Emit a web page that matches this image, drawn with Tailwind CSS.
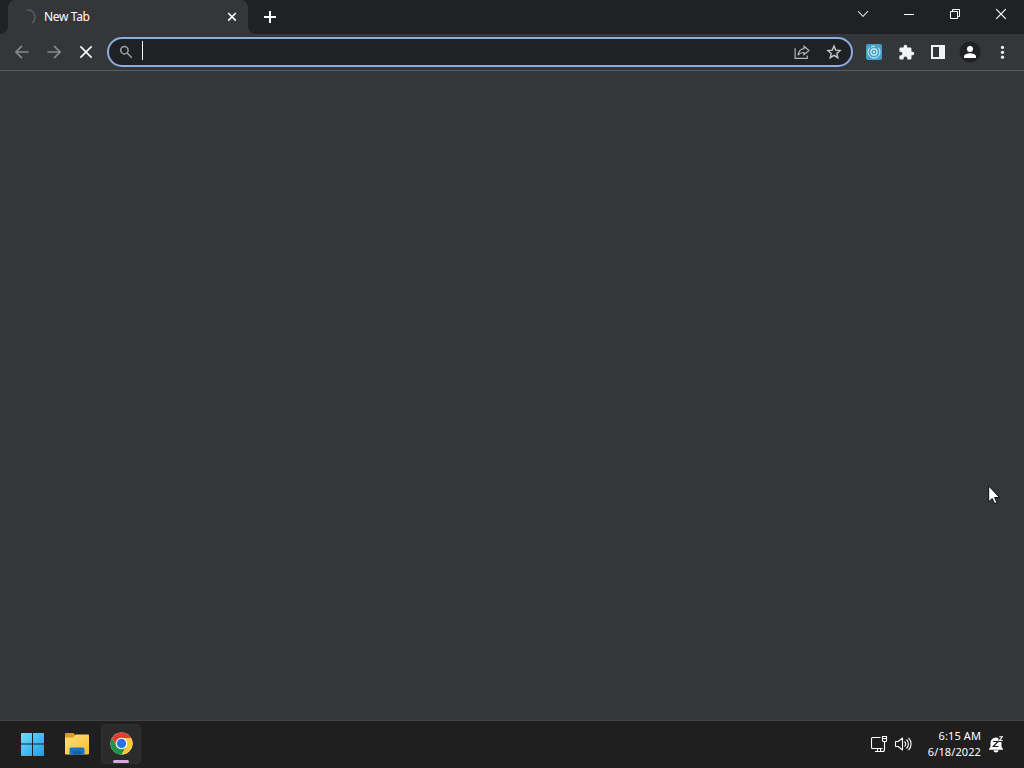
<!DOCTYPE html>
<html lang="en">
<head>
  <meta charset="UTF-8" />
  <meta name="viewport" content="width=device-width, initial-scale=1.0"/>
  <title>New Tab</title>
  <script src="https://cdn.jsdelivr.net/npm/@tailwindcss/browser@4"></script>
  <style>
    body {
      font-family: 'Noto Sans', 'Open Sans', sans-serif;
    }
  </style>
</head>
<body class="bg-[#35363a] text-white">
<div class="relative w-[1024px] h-[768px] flex flex-col overflow-hidden">

  <!-- Tab strip -->
  <header class="h-[34px] shrink-0 flex bg-[#202124]">
    <svg class="w-2 self-end h-2" viewBox="0 0 8 8" fill="#35363a"><path d="M8 0v8H0a8 8 0 0 0 8-8z"/></svg>
    <div class="w-60 flex items-center rounded-t-lg bg-[#35363a] pl-[13px] pr-2.5">
      <svg class="w-4 h-4" viewBox="0 0 16 16" fill="none" stroke="#5b5c60" stroke-width="1.5"><path d="M5.500 1.200a7 7 0 0 1 5.500 12.600"/></svg>
      <span class="ml-[7px] grow text-[12px] leading-4 tracking-[-0.35px]">New Tab</span>
      <svg class="w-3 h-3" viewBox="0 0 12 12" fill="none" stroke="#fff" stroke-width="1.6"><path d="M2.200 2l7.600 7.600M9.800 2L2.200 9.600"/></svg>
    </div>
    <svg class="w-2 self-end h-2" viewBox="0 0 8 8" fill="#35363a"><path d="M0 0v8h8a8 8 0 0 1-8-8z"/></svg>
    <button class="w-7 flex items-center justify-center">
      <svg class="w-3.5 h-3.5" viewBox="0 0 14 14" fill="none" stroke="#fff" stroke-width="2"><path d="M7 1v12M1 7h12"/></svg>
    </button>
    <div class="ml-auto h-7 flex">
      <button class="w-[46px] flex items-center justify-center">
        <svg class="w-3 h-3" viewBox="0 0 12 12" fill="none" stroke="#d5d6d8" stroke-width="1.1"><path d="M1 3.2l5 5.300 5-5.300"/></svg>
      </button>
      <button class="w-[46px] flex items-center justify-center">
        <svg class="w-2.5 h-3" viewBox="0 0 10 12" fill="none" stroke="#fff"><path d="M0 6.5h10"/></svg>
      </button>
      <button class="w-[46px] flex items-center justify-center">
        <svg class="w-3 h-3" viewBox="0 0 12 12" fill="none" stroke="#fff"><path d="M1.5 3.5h7v7h-7zM3.5 3.5v-2h7v7h-2"/></svg>
      </button>
      <button class="w-[46px] flex items-center justify-center">
        <svg class="w-3 h-3" viewBox="0 0 12 12" fill="none" stroke="#fff" stroke-width="1.2"><path d="M1.200 1.200l9.600 9.600M10.800 1.200L1.200 10.800"/></svg>
      </button>
    </div>
  </header>

  <!-- Toolbar -->
  <div class="h-[37px] shrink-0 flex items-center border-b border-[#5a5b5e] bg-[#35363a] pl-1.5 pr-1.5">
    <button class="w-8 flex justify-center">
      <svg class="w-4 h-4" viewBox="0 0 16 16" fill="none" stroke="#88898c" stroke-width="1.7"><path d="M14.600 8H2.200M8 1.900L1.900 8 8 14.100"/></svg>
    </button>
    <button class="w-8 flex justify-center">
      <svg class="w-4 h-4" viewBox="0 0 16 16" fill="none" stroke="#88898c" stroke-width="1.7"><path d="M1.400 8h12.400M8 1.900L14.100 8 8 14.100"/></svg>
    </button>
    <button class="w-8 flex justify-center">
      <svg class="w-4 h-4" viewBox="0 0 16 16" fill="none" stroke="#fff" stroke-width="1.6"><path d="M2.400 2.400l11.200 11.200M13.600 2.400L2.400 13.600"/></svg>
    </button>
    <div class="ml-[5px] w-[746px] h-[30px] flex items-center rounded-full border-2 border-[#8aaedf] bg-[#202124]">
      <svg class="ml-[9px] w-4 h-4" viewBox="0 0 16 16" fill="none" stroke="#9aa0a6" stroke-width="1.5"><circle cx="6.4" cy="6.2" r="3.7"/><path d="M9.1 9l4.700 4.700"/></svg>
      <div class="ml-2 w-px h-[19px] -mt-[3px] bg-white"></div>
      <div class="ml-auto w-8 flex justify-center">
        <svg class="w-4 h-4" viewBox="0 0 16 16" fill="none" stroke="#b4b6b9" stroke-width="1.2"><path d="M1.100 4.200v10.200h12.200v-3M10 2.200l5 4.300-5 4.200V8.500c-2.800 0-4.600.7-6 2.700.5-3.600 2.400-6 6-6.500z"/></svg>
      </div>
      <div class="mr-[1px] w-8 flex justify-center">
        <svg class="w-4 h-4" viewBox="0 0 16 16" fill="none" stroke="#c6c8ca" stroke-width="1.4"><path d="M8 2.100l1.700 4 4.400.4-3.300 2.900 1 4.300L8 11.400l-3.800 2.300 1-4.300-3.300-2.900 4.400-.4z"/></svg>
      </div>
    </div>
    <div class="ml-auto flex items-center">
      <button class="w-8 flex justify-center">
        <svg class="w-4 h-4" viewBox="0 0 16 16"><rect width="16" height="16" rx="2" fill="#43a3c6"/><g fill="none" stroke="#d8f2fb" stroke-width="1"><path d="M3.800 3.700a6 6 0 1 0 8.400 0"/><path d="M5 3.100a5.800 5.800 0 0 1 4-.8"/><circle cx="8" cy="8" r="3.100" stroke-width="1.200"/></g><circle cx="8" cy="8" r="1" fill="#fff"/></svg>
      </button>
      <button class="w-8 flex justify-center">
        <svg class="w-[17px] h-[17px]" viewBox="0 0 24 24" fill="#f1f3f4"><path d="M20.500 11H19V7c0-1.100-.9-2-2-2h-4V3.500a2.500 2.500 0 0 0-5 0V5H4c-1.100 0-1.990.9-1.990 2v3.800H3.500c1.490 0 2.700 1.210 2.700 2.700s-1.210 2.700-2.700 2.700H2V20c0 1.100.9 2 2 2h3.800v-1.500c0-1.490 1.210-2.700 2.700-2.700s2.700 1.210 2.700 2.700V22H17c1.100 0 2-.9 2-2v-4h1.500a2.500 2.500 0 0 0 0-5z"/></svg>
      </button>
      <button class="w-8 flex justify-center">
        <svg class="w-4 h-4" viewBox="0 0 16 16"><path fill="#f1f3f4" fill-rule="evenodd" d="M1 1h14v14H1zM3 3v10h6V3z"/></svg>
      </button>
      <button class="w-8 flex justify-center">
        <svg class="w-[22px] h-[22px]" viewBox="0 0 22 22"><circle cx="11" cy="11" r="10.500" fill="#202124"/><circle cx="11" cy="8" r="3" fill="#fff"/><path fill="#fff" d="M5 17v-1.800c0-2 4-3 6-3s6 1 6 3V17z"/></svg>
      </button>
      <button class="w-8 flex justify-center">
        <svg class="w-4 h-4" viewBox="0 0 16 16" fill="#f1f3f4"><circle cx="8.500" cy="3.400" r="1.600"/><circle cx="8.500" cy="8.300" r="1.600"/><circle cx="8.500" cy="13.200" r="1.600"/></svg>
      </button>
    </div>
  </div>

  <!-- Page -->
  <main class="grow bg-[#35363a]"></main>

  <!-- Taskbar -->
  <footer class="h-12 shrink-0 flex items-center border-t border-[#424345] bg-[#1f1f1f] pl-2.5 pr-5 pb-0.5">
    <div class="flex gap-px">
      <button class="w-11 h-10 flex items-center justify-center">
        <svg class="w-6 h-6" viewBox="0 0 24 24">
          <defs><linearGradient id="win" x1="0" y1="0" x2="24" y2="24" gradientUnits="userSpaceOnUse"><stop stop-color="#73e1fb"/><stop offset="1" stop-color="#1b9bef"/></linearGradient></defs>
          <path fill="url(#win)" d="M2 1h10v10.500H1V2a1 1 0 0 1 1-1zM13 1h10a1 1 0 0 1 1 1v9.500H13zM1 12.500h11V24H2a1 1 0 0 1-1-1zM13 12.500h11V23a1 1 0 0 1-1 1H13z"/>
        </svg>
      </button>
      <button class="w-11 h-10 flex items-center justify-center">
        <svg class="w-[26px] h-6" viewBox="0 0 26 24">
          <defs><linearGradient id="folder" x1="0" y1="0" x2="1" y2="1"><stop stop-color="#ffe07a"/><stop offset="1" stop-color="#f8bd32"/></linearGradient></defs>
          <path fill="#dc9c19" d="M2 1h7.500L12 3.500V7H1V2a1 1 0 0 1 1-1z"/>
          <path fill="url(#folder)" d="M1 5.500h8l3-3h12a1 1 0 0 1 1 1V21.500a1 1 0 0 1-1 1H2a1 1 0 0 1-1-1z"/>
          <path fill="#1673c5" d="M7 15.500h12a1.500 1.500 0 0 1 1.500 1.500v5.500h-15V17A1.500 1.500 0 0 1 7 15.500z"/>
          <path fill="#125da3" d="M9 19.500h8v3H9z"/>
        </svg>
      </button>
      <button class="relative ml-px w-10 h-10 flex items-center justify-center rounded border border-[#303030] bg-[#2b2b2b]">
        <svg class="w-[23px] h-[23px]" viewBox="0 0 48 48">
          <circle cx="24" cy="24" r="23" fill="#fff"/>
          <path fill="#e33b2e" d="M4.080 12.500a23 23 0 0 1 39.840 0H24A11.500 11.500 0 0 0 14.040 29.750z"/>
          <path fill="#fcc934" d="M43.920 12.500A23 23 0 0 1 24 47l9.960-17.250A11.500 11.500 0 0 0 24 12.500z"/>
          <path fill="#1e9348" d="M24 47A23 23 0 0 1 4.080 12.500l9.960 17.250a11.500 11.500 0 0 0 19.920 0z"/>
          <circle cx="24" cy="24" r="12" fill="#fff"/>
          <circle cx="24" cy="24" r="9.700" fill="#2b71de"/>
        </svg>
        <span class="absolute bottom-0 left-[11px] w-4 h-[3px] rounded-full bg-[#d5a9dc]"></span>
      </button>
    </div>

    <!-- System tray -->
    <div class="ml-auto flex items-center">
      <svg class="w-[18px] h-[18px]" viewBox="0 0 18 18" fill="none" stroke="#fff" stroke-width="1.100"><path d="M10.500 2.500h-8a1 1 0 0 0-1 1v9a1 1 0 0 0 1 1h10M5 16.500h8M7.500 13.500v3M10.500 13.500v3M12.500 1.500h4v4a1 1 0 0 1-1 1h-2a1 1 0 0 1-1-1zM12.500 3.500h4M14.500 6.500v8a2 2 0 0 1-2 2"/></svg>
      <svg class="ml-1.5 w-[18px] h-[18px]" viewBox="0 0 18 18" fill="none" stroke="#fff" stroke-width="1.100" stroke-linejoin="round"><path d="M1.500 6.500h2.700L8.500 3v12l-4.300-3.500H1.500zM10.500 6.500a3.600 3.600 0 0 1 0 5M12.500 4.500a6.300 6.300 0 0 1 0 9M14.500 2.800a8.800 8.800 0 0 1 0 12.400"/></svg>
      <div class="ml-[15px] w-[54px] text-right text-[11px] leading-4 whitespace-nowrap tracking-[0.1px]">
        <div>6:15 AM</div>
        <div>6/18/2022</div>
      </div>
      <svg class="ml-[7px] w-4 h-[18px]" viewBox="0 0 16 18">
        <path fill="#fff" d="M8 2.500A5.500 5.500 0 0 0 2.500 8v4L1 14v.8h14V14l-1.500-2V8A5.500 5.500 0 0 0 8 2.500zM5.500 15.300h5a2.500 2.200 0 0 1-5 0z"/>
        <path fill="#1f1f1f" d="M10.500 0H16v7h-5.500z"/>
        <path fill="none" stroke="#fff" stroke-width="1.100" d="M11.300 1.800h3L11.500 5.500h3.200"/>
        <path fill="none" stroke="#1f1f1f" stroke-width="1.200" d="M5 6.500h5L5.300 11.500H10.500"/>
      </svg>
    </div>
  </footer>

  <!-- Mouse pointer -->
  <svg class="absolute left-[988px] top-[485px] w-3 h-5" viewBox="0 0 12 20"><path fill="#fff" stroke="#000" stroke-width=".9" d="M.7 1v15.800l3.500-3.400 2.400 5.200 2.300-1-2.300-5.100h4.900z"/></svg>
</div>
</body>
</html>
